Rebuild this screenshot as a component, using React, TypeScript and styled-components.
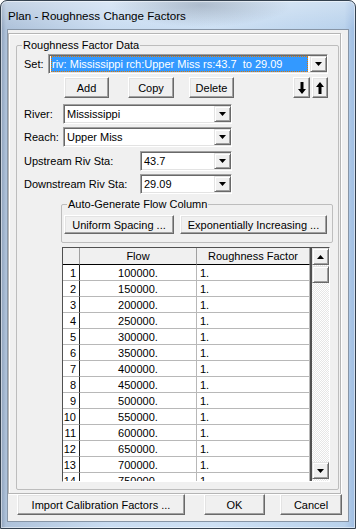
import React from 'react';
import styled, { createGlobalStyle, css } from 'styled-components';

const GlobalStyle = createGlobalStyle`
  html, body {
    margin: 0;
    padding: 0;
    background: #ffffff;
  }
  body {
    font-family: "Liberation Sans", Arial, sans-serif;
    font-size: 11px;
    color: #000;
  }
  *, *::before, *::after {
    box-sizing: border-box;
  }
`;

const flows = [
  100000, 150000, 200000, 250000, 300000, 350000, 400000, 450000, 500000, 550000, 600000, 650000,
  700000, 750000,
];

const raised = css`
  background: #f0f0f0;
  border: 1px solid;
  border-color: #ffffff #696969 #696969 #ffffff;
  box-shadow: inset -1px -1px 0 #a0a0a0, inset 1px 1px 0 #e3e3e3;
`;

const Window = styled.div`
  width: 356px;
  height: 529px;
  display: flex;
  flex-direction: column;
  border: 1px solid #34414f;
  border-radius: 7px 7px 0 0;
  overflow: hidden;
  background:
    radial-gradient(ellipse 90px 22px at 200px 4px, rgba(90, 105, 125, 0.35), rgba(90, 105, 125, 0)),
    linear-gradient(180deg, rgba(255, 255, 255, 0.3) 0, rgba(255, 255, 255, 0) 28px),
    linear-gradient(90deg, #8fa2bb 0, #aec2da 5px, #c9dcf1 30%, #cde0f4 60%, #b9d2ec 97%, #9fbde2 100%);
  box-shadow: inset 0 0 0 1px rgba(255, 255, 255, 0.5);
`;

const TitleBar = styled.div`
  height: 28px;
  flex: none;
  display: flex;
  align-items: center;
  padding: 1px 0 0 7px;
  font-size: 11.6px;
  color: #000;
`;

const Client = styled.div`
  flex: 1;
  margin: 0 6px 6px;
  display: flex;
  flex-direction: column;
  padding: 3px 0 6px;
  background: #f0f0f0;
  border: 1px solid #8795a6;
`;

const Frame = styled.div`
  width: 333px;
  height: 461px;
  flex: none;
  padding: 4px 0 0 7px;
  border: 1px solid #b5b5b5;
  box-shadow: inset 1px 1px 0 #ffffff, 1px 1px 0 #ffffff;
`;

const Group = styled.fieldset<{ $width: number }>`
  margin: 0;
  min-width: 0;
  width: ${(p) => p.$width}px;
  padding: 2px 5px 7px 7px;
  border: 1px solid #bdbdbd;
  border-radius: 2px;
`;

const SubGroup = styled.fieldset`
  margin: 3px 0 0 37px;
  min-width: 0;
  width: 272px;
  padding: 4px 0 8px 2px;
  border: 1px solid #bdbdbd;
  border-radius: 2px;
  display: flex;
  gap: 6px;
`;

const Legend = styled.legend<{ $indent: number }>`
  margin-left: ${(p) => p.$indent}px;
  padding: 0 1px;
  line-height: 14px;
  font-size: 11px;
`;

const Row = styled.div<{ $top?: number }>`
  display: flex;
  align-items: center;
  height: 20px;
  margin-top: ${(p) => p.$top ?? 0}px;
`;

const Label = styled.span<{ $width: number }>`
  width: ${(p) => p.$width}px;
  flex: none;
  white-space: nowrap;
`;

const Combo = styled.div<{ $width: number }>`
  width: ${(p) => p.$width}px;
  height: 20px;
  flex: none;
  display: flex;
  padding: 1px 0 1px 1px;
  background: #ffffff;
  border: 1px solid;
  border-color: #a0a0a0 #ffffff #ffffff #a0a0a0;
  box-shadow: inset 1px 1px 0 #696969, inset -1px -1px 0 #e3e3e3;
`;

const ComboText = styled.div<{ $selected?: boolean }>`
  flex: 1;
  min-width: 0;
  display: flex;
  align-items: center;
  padding-left: 2px;
  white-space: pre;
  overflow: hidden;
  ${(p) =>
    p.$selected &&
    css`
      margin: 0 2px 0 1px;
      padding-left: 1px;
      background: #3399ff;
      color: #ffffff;
      outline: 1px dotted #e07800;
      outline-offset: -1px;
    `}
`;

const DropButton = styled.div`
  width: 17px;
  flex: none;
  display: flex;
  align-items: center;
  justify-content: center;
  background: #f0f0f0;
  border: 1px solid;
  border-color: #e3e3e3 #696969 #696969 #e3e3e3;
  box-shadow: inset 1px 1px 0 #ffffff, inset -1px -1px 0 #a0a0a0;
`;

const Button = styled.button<{ $width: number; $gap?: number; $height?: number }>`
  ${raised};
  width: ${(p) => p.$width}px;
  height: ${(p) => p.$height ?? 21}px;
  margin-left: ${(p) => p.$gap ?? 0}px;
  flex: none;
  padding: 0;
  font-family: inherit;
  font-size: 11px;
  color: #000;
  display: flex;
  align-items: center;
  justify-content: center;
  white-space: nowrap;
`;

const Toolbar = styled.div`
  display: flex;
  margin-top: 3px;
  height: 21px;
`;

const GridBox = styled.div`
  margin: 4px 0 0 38px;
  width: 268px;
  height: 235px;
  display: flex;
  border: 1px solid;
  border-color: #505050 #ffffff #ffffff #505050;
  background: #ffffff;
`;

const Table = styled.div`
  width: 249px;
  flex: none;
  overflow: hidden;
  border-right: 2px solid #505050;
`;

const GridRow = styled.div`
  display: grid;
  grid-template-columns: 17px 117px 113px;
`;

const HeadCell = styled.div`
  height: 17px;
  background: #f0f0f0;
  border-right: 1px solid #a0a0a0;
  border-bottom: 1px solid #000;
  display: flex;
  align-items: center;
  justify-content: center;
`;

const Cell = styled.div<{ $align: 'left' | 'center' | 'right'; $rowHead?: boolean }>`
  height: 16px;
  display: flex;
  align-items: center;
  justify-content: ${(p) =>
    p.$align === 'left' ? 'flex-start' : p.$align === 'right' ? 'flex-end' : 'center'};
  padding: ${(p) => (p.$align === 'left' ? '0 0 0 3px' : p.$align === 'right' ? '0 3px 0 0' : '0')};
  border-bottom: 1px solid #b8b8b8;
  border-right: 1px solid ${(p) => (p.$rowHead ? '#202020' : '#b8b8b8')};
  white-space: nowrap;
`;

const ScrollBar = styled.div`
  width: 17px;
  flex: none;
  display: flex;
  flex-direction: column;
  padding-bottom: 2px;
  background-color: #ffffff;
  background-image: repeating-conic-gradient(#e6e6e6 0 25%, #ffffff 0 50%);
  background-size: 2px 2px;
`;

const ScrollBtn = styled.div<{ $top?: number }>`
  height: 17px;
  flex: none;
  margin-top: ${(p) => p.$top ?? 0}px;
  display: flex;
  align-items: center;
  justify-content: center;
  background: #f0f0f0;
  border: 1px solid;
  border-color: #e3e3e3 #696969 #696969 #e3e3e3;
  box-shadow: inset 1px 1px 0 #ffffff, inset -1px -1px 0 #a0a0a0;
`;

const Track = styled.div`
  flex: 1;
`;

const Footer = styled.div`
  display: flex;
  padding-left: 9px;
  height: 21px;
`;

const Triangle = ({ up }: { up?: boolean }) => (
  <svg width="7" height="4" viewBox="0 0 7 4">
    <polygon points={up ? '3.5,0 7,4 0,4' : '0,0 7,0 3.5,4'} fill="#000" />
  </svg>
);

const BigArrow = ({ up }: { up?: boolean }) => (
  <svg width="8" height="12" viewBox="0 0 8 12" style={up ? { transform: 'rotate(180deg)' } : undefined}>
    <polygon points="2.5,0 5.5,0 5.5,7 8,7 4,12 0,7 2.5,7" fill="#000" />
  </svg>
);

const Field = ({ label, labelWidth, width, value, top }: {
  label: string;
  labelWidth: number;
  width: number;
  value: string;
  top: number;
}) => (
  <Row $top={top}>
    <Label $width={labelWidth}>{label}</Label>
    <Combo $width={width}>
      <ComboText>{value}</ComboText>
      <DropButton>
        <Triangle />
      </DropButton>
    </Combo>
  </Row>
);

const App = () => {
  return (
    <>
      <GlobalStyle />
      <Window>
        <TitleBar>Plan - Roughness Change Factors</TitleBar>
        <Client>
          <Frame>
            <Group $width={323}>
              <Legend $indent={-2}>Roughness Factor Data</Legend>
              <Row>
                <Label $width={24}>Set:</Label>
                <Combo $width={280}>
                  <ComboText $selected>riv: Mississippi rch:Upper Miss rs:43.7  to 29.09</ComboText>
                  <DropButton>
                    <Triangle />
                  </DropButton>
                </Combo>
              </Row>
              <Toolbar>
                <Button $width={45} $gap={40}>Add</Button>
                <Button $width={46} $gap={19}>Copy</Button>
                <Button $width={45} $gap={15}>Delete</Button>
                <Button $width={17} $gap={59}>
                  <BigArrow />
                </Button>
                <Button $width={16} $gap={2}>
                  <BigArrow up />
                </Button>
              </Toolbar>
              <Field label="River:" labelWidth={39} width={169} value="Mississippi" top={6} />
              <Field label="Reach:" labelWidth={39} width={169} value="Upper Miss" top={3} />
              <Field label="Upstream Riv Sta:" labelWidth={116} width={92} value="43.7" top={4} />
              <Field label="Downstream Riv Sta:" labelWidth={116} width={92} value="29.09" top={3} />
              <SubGroup>
                <Legend $indent={3}>Auto-Generate Flow Column</Legend>
                <Button $width={110} $height={19}>Uniform Spacing ...</Button>
                <Button $width={147} $height={19}>Exponentially Increasing ...</Button>
              </SubGroup>
              <GridBox>
                <Table>
                  <GridRow>
                    <HeadCell />
                    <HeadCell>Flow</HeadCell>
                    <HeadCell>Roughness Factor</HeadCell>
                  </GridRow>
                  {flows.map((f, i) => (
                    <GridRow key={f}>
                      <Cell $align="right" $rowHead>
                        {i + 1}
                      </Cell>
                      <Cell $align="center">{f}.</Cell>
                      <Cell $align="left">1.</Cell>
                    </GridRow>
                  ))}
                </Table>
                <ScrollBar>
                  <ScrollBtn>
                    <Triangle up />
                  </ScrollBtn>
                  <ScrollBtn $top={1} />
                  <Track />
                  <ScrollBtn>
                    <Triangle />
                  </ScrollBtn>
                </ScrollBar>
              </GridBox>
            </Group>
          </Frame>
          <Footer>
            <Button $width={168}>Import Calibration Factors ...</Button>
            <Button $width={61} $gap={19}>OK</Button>
            <Button $width={62} $gap={15}>Cancel</Button>
          </Footer>
        </Client>
      </Window>
    </>
  );
};

export default App;
